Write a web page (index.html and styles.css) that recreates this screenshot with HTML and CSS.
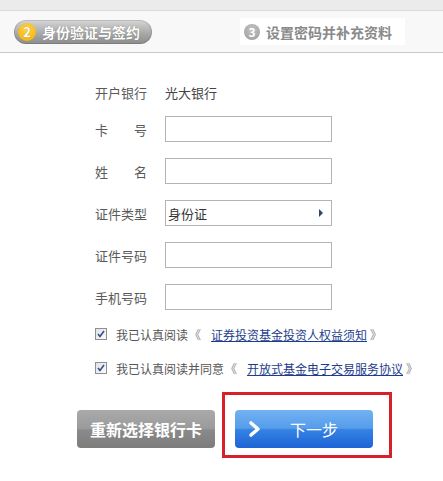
FILE: index.html
```html
<!DOCTYPE html>
<html lang="zh-CN">
<head>
    <meta charset="UTF-8">
    <meta name="viewport" content="width=device-width, initial-scale=1.0">
    <title>开户 - 身份验证与签约</title>
    <link rel="stylesheet" href="styles.css">
</head>
<body>
    <div class="topbar"></div>
    <div class="steps">
        <div class="step current">
            <span class="num">2</span>
            <span class="step-text">身份验证与签约</span>
        </div>
        <div class="step next">
            <span class="num">3</span>
            <span class="step-text">设置密码并补充资料</span>
        </div>
    </div>

    <form class="form">
        <div class="row info">
            <span class="label">开户银行</span>
            <span class="value">光大银行</span>
        </div>
        <div class="row">
            <span class="label">卡号</span>
            <input type="text" class="field">
        </div>
        <div class="row">
            <span class="label">姓名</span>
            <input type="text" class="field">
        </div>
        <div class="row">
            <span class="label">证件类型</span>
            <div class="field select">
                <span>身份证</span>
                <span class="arrow"></span>
            </div>
        </div>
        <div class="row">
            <span class="label">证件号码</span>
            <input type="text" class="field">
        </div>
        <div class="row last">
            <span class="label">手机号码</span>
            <input type="text" class="field">
        </div>

        <div class="agree">
            <span class="check">
                <svg width="8" height="8" viewBox="0 0 8 8"><polyline points="1,4 3,6.5 7,1" fill="none" stroke="#2f4f96" stroke-width="1.6"/></svg>
            </span>
            <span>我已认真阅读</span><span class="quote open">《</span><a href="#">证券投资基金投资人权益须知</a><span class="quote close">》</span>
        </div>
        <div class="agree">
            <span class="check">
                <svg width="8" height="8" viewBox="0 0 8 8"><polyline points="1,4 3,6.5 7,1" fill="none" stroke="#2f4f96" stroke-width="1.6"/></svg>
            </span>
            <span>我已认真阅读并同意</span><span class="quote open">《</span><a href="#">开放式基金电子交易服务协议</a><span class="quote close">》</span>
        </div>

        <div class="buttons">
            <button type="button" class="btn btn-gray">重新选择银行卡</button>
            <div class="highlight">
                <button type="button" class="btn btn-blue">
                    <svg width="14" height="18" viewBox="0 0 14 18"><polyline points="3,3 10,9 3,15" fill="none" stroke="#fff" stroke-width="3.6" stroke-linecap="round" stroke-linejoin="round"/></svg>
                    <span class="next-text">下一步</span>
                </button>
            </div>
        </div>
    </form>
</body>
</html>
```

FILE: styles.css
```css
body {
    margin: 0;
    padding: 0;
    width: 443px;
    background-color: #fff;
    font-family: "Noto Sans CJK SC", "Liberation Sans", sans-serif;
    color: #555;
}

.topbar {
    height: 10px;
    background-color: #ebebeb;
}

.steps {
    display: flex;
    align-items: center;
    height: 41px;
    background-color: #f8f8f8;
    border-top: 1px solid #dcdcdc;
    border-bottom: 1px solid #c8c8c8;
}

.step {
    display: flex;
    align-items: center;
    box-sizing: border-box;
    font-size: 14px;
    font-weight: bold;
}

.step.current {
    margin-left: 14px;
    width: 138px;
    height: 24px;
    padding-left: 4px;
    border-radius: 12px;
    background: linear-gradient(#d6d6d6, #a9a9a9 55%, #8c8c8c);
    box-shadow: inset 0 0 0 1px rgba(0,0,0,0.12);
    color: #fff;
    text-shadow: 0 0 1px rgba(0,0,0,0.4);
}

.step.current .num {
    width: 18px;
    height: 18px;
    border-radius: 50%;
    background: radial-gradient(circle at 50% 35%, #ffd54a, #f2ac00);
    color: #fff;
    font-size: 13px;
}

.step.next {
    margin-left: 88px;
    width: 165px;
    height: 27px;
    padding-left: 4px;
    background-color: #fff;
    color: #8a8a8a;
}

.step.next .num {
    width: 16px;
    height: 16px;
    border-radius: 50%;
    background: radial-gradient(circle at 50% 35%, #c4c4c4, #9a9a9a);
    color: #fff;
    font-size: 12px;
}

.num {
    display: flex;
    align-items: center;
    justify-content: center;
    line-height: 1;
}

.step-text {
    margin-left: 6px;
    line-height: 1;
}

.form {
    padding-left: 95px;
    padding-top: 26px;
}

.row {
    display: flex;
    align-items: center;
    height: 26px;
    margin-bottom: 16px;
    font-size: 13px;
}

.row.info {
    margin-bottom: 11px;
}

.row.last {
    margin-bottom: 14px;
}

.label {
    flex-shrink: 0;
    width: 52px;
    margin-right: 18px;
    white-space: nowrap;
    text-align: justify;
    text-align-last: justify;
    color: #5a5a5a;
}

.value {
    color: #444;
}

.field {
    box-sizing: border-box;
    width: 167px;
    height: 26px;
    margin: 0;
    padding: 0 2px;
    border: 1px solid #b4b4b4;
    background-color: #fff;
    font-family: inherit;
    font-size: 13px;
    outline: none;
}

.select {
    display: flex;
    align-items: center;
    justify-content: space-between;
    padding-right: 8px;
    color: #333;
}

.arrow {
    width: 0;
    height: 0;
    border-top: 4px solid transparent;
    border-bottom: 4px solid transparent;
    border-left: 4px solid #2a4866;
}

.agree {
    display: flex;
    align-items: center;
    height: 20px;
    margin-bottom: 14px;
    font-size: 12px;
    color: #555;
    white-space: nowrap;
}

.check {
    box-sizing: border-box;
    display: flex;
    align-items: center;
    justify-content: center;
    width: 12px;
    height: 12px;
    margin-right: 9px;
    border: 1px solid #8f8f8f;
    background: linear-gradient(135deg, #e2e2e2, #fbfbfb);
}

.quote {
    color: #888;
}

.quote.open {
    margin-left: 1px;
    margin-right: 10px;
}

.quote.close {
    margin-left: 3px;
}

.agree a {
    color: #1d3d8c;
    text-decoration: underline;
}

.buttons {
    display: flex;
    align-items: flex-start;
    margin-left: -18px;
    margin-top: 4px;
}

.btn {
    box-sizing: border-box;
    width: 138px;
    height: 38px;
    border: none;
    border-radius: 4px;
    color: #fff;
    font-family: inherit;
    cursor: pointer;
}

.btn-gray {
    margin-top: 18px;
    background: linear-gradient(#aaaaaa, #9a9a9a 50%, #8a8a8a 52%, #7c7c7c);
    font-size: 16px;
    font-weight: bold;
}

.highlight {
    margin-left: 7px;
    padding: 15px 16px 7px 10px;
    border: 3px solid #d7202a;
}

.btn-blue {
    display: flex;
    align-items: center;
    padding-left: 13px;
    background: linear-gradient(#72b2f1, #559ceb 48%, #3582e3 52%, #1d63d6);
    font-size: 16px;
}

.next-text {
    margin-left: 28px;
}
```
